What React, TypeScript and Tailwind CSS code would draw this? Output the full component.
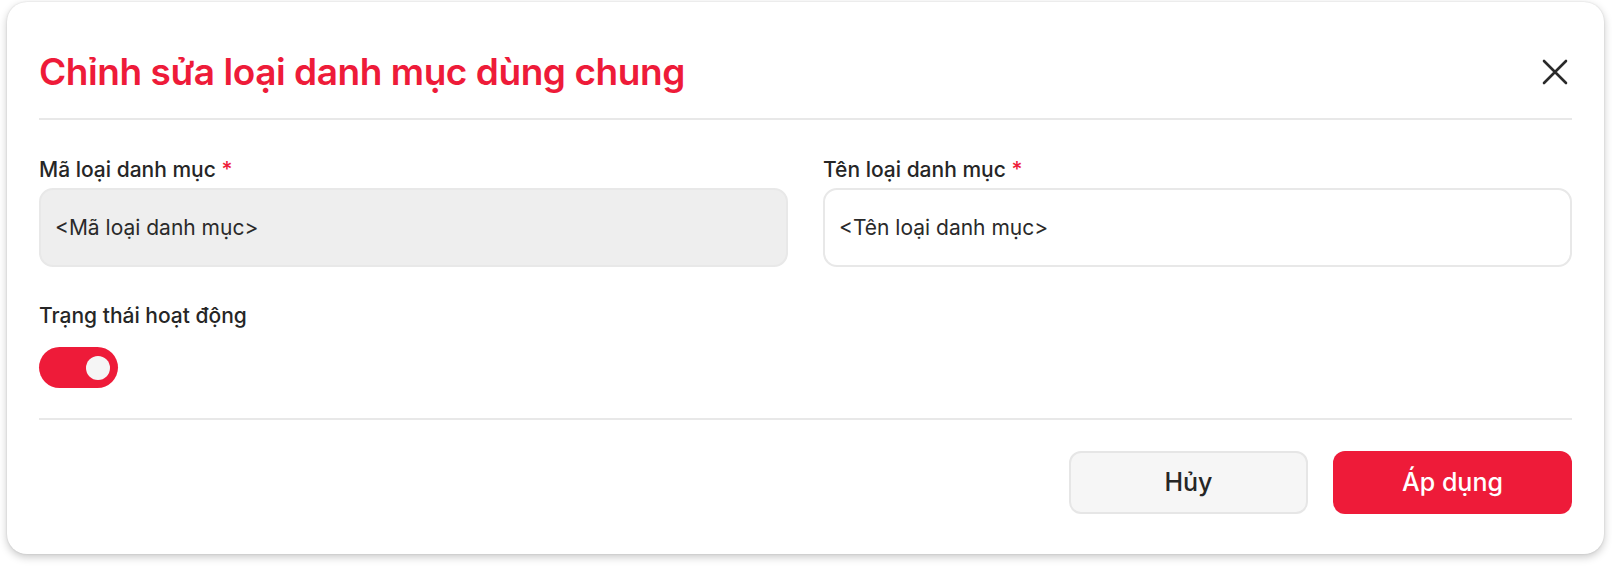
import React from "react";

export default function App() {
  return (
    <div className="bg-white w-[1612px] h-[570px] pt-[2px] pl-[7px]" style={{ fontFamily: "Inter, 'Noto Sans', sans-serif" }}>
      <div className="w-[1597px] h-[552px] rounded-[20px] bg-white px-8 shadow-[0_3px_8px_rgba(0,0,0,0.22),0_0_2px_rgba(0,0,0,0.12)]">
        <div className="flex items-center justify-between pt-[46px] pb-[22px]">
          <h1 className="text-[37px] leading-[48px] font-semibold text-[#ee1b39] tracking-[-0.45px]">Chỉnh sửa loại danh mục dùng chung</h1>
          <button className="w-[30px] h-[30px] flex items-center justify-center mr-[2px]">
            <svg width="26" height="26" viewBox="0 0 26 26" fill="none" stroke="#2a2a2a" strokeWidth="2.6" strokeLinecap="round">
              <path d="M2 2 L24 24 M24 2 L2 24" />
            </svg>
          </button>
        </div>
        <div className="h-[2px] bg-[#e8e8e8]" />
        <div className="pt-[38px] pb-[30px]">
          <div className="grid grid-cols-2 gap-x-[35px]">
            <div>
              <div className="text-[21px] leading-[24px] font-medium text-[#262626]">
                Mã loại danh mục <span className="text-[#ee1b39]">*</span>
              </div>
              <div className="mt-[6px] h-[79px] rounded-[14px] bg-[#eeeeee] border-2 border-[#e8e8e8] flex items-center px-[14px] text-[21px] text-[#2a2a2a]">
                &lt;Mã loại danh mục&gt;
              </div>
            </div>
            <div>
              <div className="text-[21px] leading-[24px] font-medium text-[#262626]">
                Tên loại danh mục <span className="text-[#ee1b39]">*</span>
              </div>
              <div className="mt-[6px] h-[79px] rounded-[14px] bg-white border-2 border-[#e8e8e8] flex items-center px-[14px] text-[21px] text-[#2a2a2a]">
                &lt;Tên loại danh mục&gt;
              </div>
            </div>
          </div>
          <div className="mt-[37px] text-[21px] leading-[24px] font-medium text-[#262626]">Trạng thái hoạt động</div>
          <div className="mt-[19px] w-[79px] h-[41px] rounded-full bg-[#ee1b39] flex items-center justify-end pr-[8px]">
            <div className="w-[24px] h-[24px] rounded-full bg-[#f5f5f5]" />
          </div>
        </div>
        <div className="h-[2px] bg-[#e8e8e8]" />
        <div className="flex justify-end gap-[25px] pt-[31px]">
          <button className="w-[239px] h-[63px] rounded-[12px] bg-[#f6f6f6] border-2 border-[#e6e6e6] text-[25px] text-[#262626] font-medium">Hủy</button>
          <button className="w-[239px] h-[63px] rounded-[12px] bg-[#ee1b39] text-[25px] text-white font-medium">Áp dụng</button>
        </div>
      </div>
    </div>
  );
}
